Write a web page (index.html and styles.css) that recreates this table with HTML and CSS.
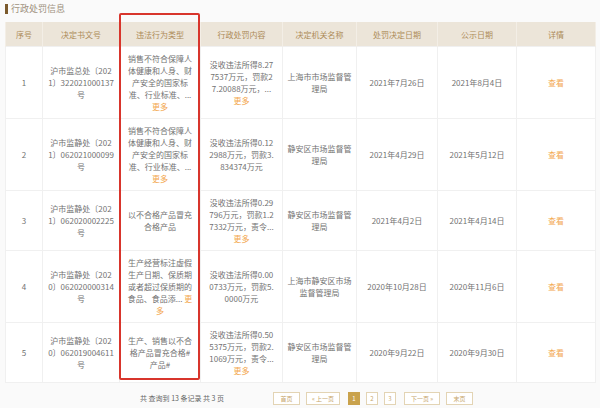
FILE: index.html
```html
<!DOCTYPE html>
<html lang="zh">
<head>
<meta charset="utf-8">
<title>行政处罚信息</title>
<link rel="stylesheet" href="styles.css">
</head>
<body>
<div class="page">
  <div class="title"><span class="bar"></span><span class="title-text">行政处罚信息</span></div>
  <div class="table-wrap">
    <table class="grid">
      <colgroup>
        <col class="c1"><col class="c2"><col class="c3"><col class="c4"><col class="c5"><col class="c6"><col class="c7"><col class="c8">
      </colgroup>
      <thead>
        <tr><th>序号</th><th>决定书文号</th><th>违法行为类型</th><th>行政处罚内容</th><th>决定机关名称</th><th>处罚决定日期</th><th>公示日期</th><th>详情</th></tr>
      </thead>
      <tbody>
        <tr>
          <td>1</td>
          <td>沪市监总处〔202<br>1〕322021000137<br>号</td>
          <td>销售不符合保障人<br>体健康和人身、财<br>产安全的国家标<br>准、行业标准、...<br><span class="more">更多</span></td>
          <td>没收违法所得8.27<br>7537万元，罚款2<br>7.20088万元，...<br><span class="more">更多</span></td>
          <td>上海市市场监督管<br>理局</td>
          <td>2021年7月26日</td>
          <td>2021年8月4日</td>
          <td><span class="more">查看</span></td>
        </tr>
        <tr>
          <td>2</td>
          <td>沪市监静处〔202<br>1〕062021000099<br>号</td>
          <td>销售不符合保障人<br>体健康和人身、财<br>产安全的国家标<br>准、行业标准、...<br><span class="more">更多</span></td>
          <td>没收违法所得0.12<br>2988万元，罚款3.<br>834374万元</td>
          <td>静安区市场监督管<br>理局</td>
          <td>2021年4月29日</td>
          <td>2021年5月12日</td>
          <td><span class="more">查看</span></td>
        </tr>
        <tr>
          <td>3</td>
          <td>沪市监静处〔202<br>1〕062020002225<br>号</td>
          <td>以不合格产品冒充<br>合格产品</td>
          <td>没收违法所得0.29<br>796万元，罚款1.2<br>7332万元，责令...<br><span class="more">更多</span></td>
          <td>静安区市场监督管<br>理局</td>
          <td>2021年4月2日</td>
          <td>2021年4月14日</td>
          <td><span class="more">查看</span></td>
        </tr>
        <tr>
          <td>4</td>
          <td>沪市监静处〔202<br>0〕062020000314<br>号</td>
          <td>生产经营标注虚假<br>生产日期、保质期<br>或者超过保质期的<br>食品、食品添... <span class="more">更</span><br><span class="more">多</span></td>
          <td>没收违法所得0.00<br>0733万元，罚款5.<br>0000万元</td>
          <td>上海市静安区市场<br>监督管理局</td>
          <td>2020年10月28日</td>
          <td>2020年11月6日</td>
          <td><span class="more">查看</span></td>
        </tr>
        <tr>
          <td>5</td>
          <td>沪市监静处〔202<br>0〕062019004611<br>号</td>
          <td>生产、销售以不合<br>格产品冒充合格#<br>产品#</td>
          <td>没收违法所得0.50<br>5375万元，罚款2.<br>1069万元，责令...<br><span class="more">更多</span></td>
          <td>静安区市场监督管<br>理局</td>
          <td>2020年9月22日</td>
          <td>2020年9月30日</td>
          <td><span class="more">查看</span></td>
        </tr>
      </tbody>
    </table>
    <div class="highlight"></div>
  </div>
  <div class="pager">
    <span class="summary">共 查询到 13 条记录 共 3 页</span>
    <div class="buttons">
      <span class="btn w-first">首页</span>
      <span class="btn w-prev">« 上一页</span>
      <span class="btn num active">1</span>
      <span class="btn num">2</span>
      <span class="btn num">3</span>
      <span class="btn w-next">下一页 »</span>
      <span class="btn w-last">末页</span>
    </div>
  </div>
</div>
</body>
</html>
```

FILE: styles.css
```css
html, body {
  margin: 0;
  padding: 0;
}
body {
  background: #fafafa;
  font-family: "Noto Sans CJK SC", "Noto Sans", sans-serif;
  color: #707070;
  width: 600px;
  height: 408px;
  overflow: hidden;
}
.page {
  padding: 0 5px;
}
.title {
  height: 22px;
  display: flex;
  align-items: flex-start;
  padding-top: 3px;
  box-sizing: border-box;
}
.bar {
  width: 3px;
  height: 10px;
  background: #7b5a2c;
  margin-top: 1px;
  margin-right: 3px;
}
.title-text {
  font-size: 9px;
  line-height: 12px;
  color: #a09280;
}
.table-wrap {
  position: relative;
}
.grid {
  width: 590px;
  border-collapse: collapse;
  table-layout: fixed;
  background: #fff;
}
.c1 { width: 37px; }
.c2 { width: 77px; }
.c3 { width: 81px; }
.c4 { width: 82px; }
.c5 { width: 74px; }
.c6 { width: 81px; }
.c7 { width: 79px; }
.c8 { width: 79px; }
.grid th {
  background: #ece5d9;
  color: #ad8b58;
  font-weight: normal;
  font-size: 8px;
  height: 24px;
  padding: 0;
  border-left: 1px solid #f3eee6;
  border-right: 1px solid #f3eee6;
}
.grid td {
  font-size: 8px;
  line-height: 12px;
  text-align: center;
  vertical-align: middle;
  padding: 6px 3px 5px;
  border: 1px solid #f0f0f0;
  color: #727272;
  white-space: nowrap;
}
.more {
  color: #f3a850;
}
.highlight {
  position: absolute;
  left: 114px;
  top: -9px;
  width: 77px;
  height: 363px;
  border: 2px solid #d8352c;
  border-radius: 2px;
  pointer-events: none;
}
.pager {
  display: flex;
  align-items: center;
  margin-top: 8px;
  padding-left: 135px;
  height: 14px;
}
.summary {
  font-size: 7px;
  color: #666;
  width: 133px;
}
.buttons {
  display: flex;
  gap: 6px;
}
.btn {
  box-sizing: border-box;
  height: 13px;
  border: 1px solid #e3d4b4;
  color: #c6a56a;
  font-size: 6px;
  line-height: 11px;
  text-align: center;
  background: #fff;
}
.w-first { width: 27px; }
.w-prev { width: 34px; margin-right: 2px; }
.num { width: 12px; }
.w-next { width: 36px; margin-left: 2px; }
.w-last { width: 27px; }
.active {
  background: #c9a24c;
  border-color: #c9a24c;
  color: #fff;
}
```
